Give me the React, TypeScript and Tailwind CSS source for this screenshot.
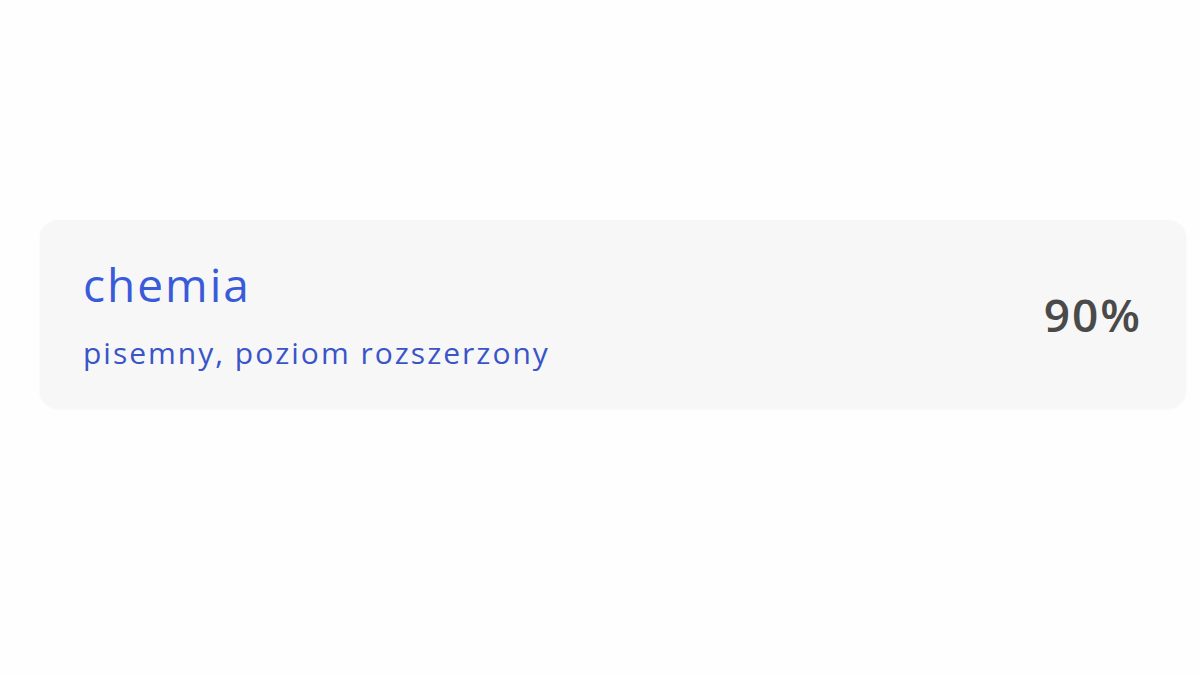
export default function App() {
  return (
    <div className="min-h-screen w-full bg-[#fefefe] pt-[220px] pl-[40px] pr-[14px] font-['Open_Sans',sans-serif]">
      <div className="flex items-center justify-between rounded-[18px] bg-[#f7f7f7] h-[188px] pl-[43px] pr-[46px] shadow-[0_1px_3px_rgba(0,0,0,0.04)]">
        <div className="flex flex-col">
          <span className="text-[46px] leading-none tracking-[2px] text-[#3a5bd9] font-medium">chemia</span>
          <span className="mt-[31px] text-[30px] leading-none tracking-[2px] text-[#3a55c8] font-medium">
            pisemny, poziom rozszerzony
          </span>
        </div>
        <span className="text-[46px] leading-none tracking-[2px] font-semibold text-[#4a4a4a] -mr-[2px]">90%</span>
      </div>
    </div>
  );
}
